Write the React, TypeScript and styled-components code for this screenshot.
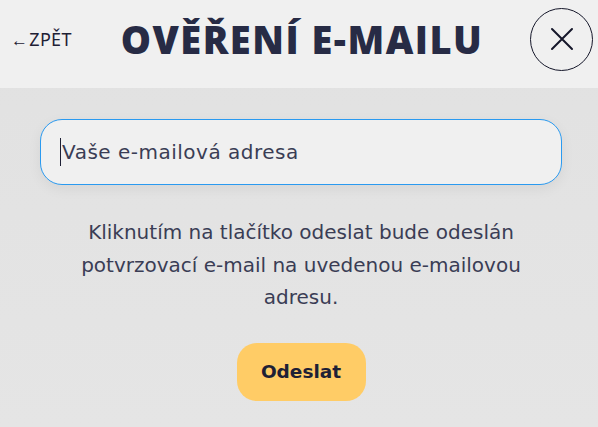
import React from "react";
import styled, { createGlobalStyle } from "styled-components";

const Global = createGlobalStyle`
  html, body {
    margin: 0;
    padding: 0;
    height: 100%;
    background: #e4e4e4;
  }
  * { box-sizing: border-box; }
`;

const App = () => {
  return (
    <Page>
      <Global />
      <Header>
        <Back>
          <Arrow>←</Arrow>ZPĚT
        </Back>
        <Title>OVĚŘENÍ E-MAILU</Title>
        <Close aria-label="Zavřít">
          <svg width="24" height="24" viewBox="0 0 24 24" fill="none">
            <path d="M2 2 L22 22 M22 2 L2 22" stroke="#15172a" strokeWidth="2" strokeLinecap="round" />
          </svg>
        </Close>
      </Header>
      <Content>
        <InputWrap>
          <Caret />
          <EmailInput placeholder="Vaše e-mailová adresa" />
        </InputWrap>
        <Info>
          Kliknutím na tlačítko odeslat bude odeslán potvrzovací e-mail na uvedenou e-mailovou adresu.
        </Info>
        <Submit>Odeslat</Submit>
      </Content>
    </Page>
  );
};

export default App;

const Page = styled.div`
  min-height: 100vh;
  background: linear-gradient(#e1e1e1, #e5e5e5);
  font-family: "DejaVu Sans", "Noto Sans", sans-serif;
`;

const Header = styled.div`
  height: 88px;
  background: #f0f0f0;
  display: grid;
  grid-template-columns: 1fr auto 1fr;
  align-items: center;
  padding: 0 5px 0 11px;
`;

const Back = styled.div`
  font-family: "Noto Sans", sans-serif;
  font-size: 18px;
  letter-spacing: 0.3px;
  color: #1e2035;
  display: flex;
  align-items: center;
  margin-top: -10px;
`;

const Arrow = styled.span`
  font-size: 17px;
  margin-right: 1px;
`;

const Title = styled.div`
  font-family: "Open Sans", sans-serif;
  font-weight: 800;
  font-size: 38px;
  letter-spacing: 1.5px;
  color: #272b45;
  margin-top: -10px;
`;

const Close = styled.button`
  justify-self: end;
  width: 63px;
  height: 63px;
  border-radius: 50%;
  border: 1px solid #15172a;
  background: transparent;
  display: flex;
  align-items: center;
  justify-content: center;
  padding: 0;
  margin-top: -10px;
`;

const Content = styled.div`
  display: flex;
  flex-direction: column;
  align-items: center;
  padding: 31px 36px 0 40px;
`;

const InputWrap = styled.div`
  position: relative;
  width: 100%;
  height: 66px;
  border: 1px solid #2a9af0;
  border-radius: 22px;
  background: #f0f0f0;
  box-shadow: 0 4px 14px rgba(0, 0, 0, 0.06);
  display: flex;
  align-items: center;
  padding-left: 19px;
`;

const Caret = styled.span`
  position: absolute;
  left: 19px;
  top: 18px;
  width: 1px;
  height: 28px;
  background: #1e2035;
`;

const EmailInput = styled.input`
  border: none;
  outline: none;
  background: transparent;
  width: 100%;
  font-family: "DejaVu Sans", sans-serif;
  font-size: 20px;
  letter-spacing: 0.5px;
  color: #3a3d55;
  &::placeholder {
    color: #3a3d55;
  }
`;

const Info = styled.p`
  margin: 31px 0 0;
  width: 470px;
  text-align: center;
  font-size: 20px;
  line-height: 32.5px;
  color: #3a3d55;
`;

const Submit = styled.button`
  margin-top: 29px;
  width: 129px;
  height: 58px;
  border: none;
  border-radius: 20px;
  background: #ffcc66;
  font-family: "DejaVu Sans", sans-serif;
  font-weight: 700;
  font-size: 18.5px;
  color: #1e2035;
`;
